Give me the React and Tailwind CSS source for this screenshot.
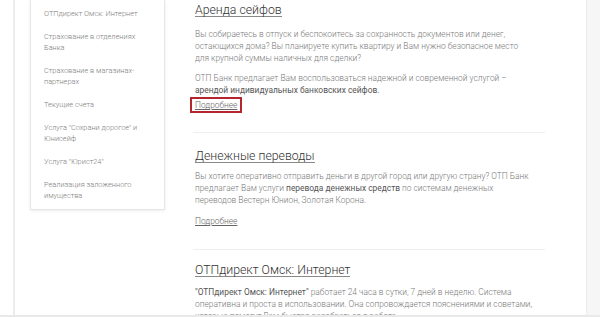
import React from "react";

const sideItems = [
  "ОТПдирект Омск: Интернет",
  "Страхование в отделениях Банка",
  "Страхование в магазинах-партнерах",
  "Текущие счета",
  "Услуга \"Сохрани дорогое\" и Юнисейф",
  "Услуга \"Юрист24\"",
  "Реализация заложенного имущества",
];

const Heading = ({ children }) => (
  <h2 className="inline-block text-[12.3px] font-light leading-[12px] text-[#333] border-b border-[#888]">
    {children}
  </h2>
);

const App = () => {
  return (
    <div
      className="w-[600px] h-[317px] overflow-hidden bg-white flex border-b-2 border-[#e9e9e9]"
      style={{ fontFamily: "Roboto, 'Noto Sans', sans-serif" }}
    >
      <div className="w-[13px] shrink-0" />
      <div className="flex-1 flex border-l-2 border-r border-[#ececec]">
        {/* Боковое меню */}
        <div className="ml-[15px] w-[135px] shrink-0 self-start border border-t-0 border-[#e6e6e6] shadow-[0_1px_3px_rgba(0,0,0,0.08)] pl-[13px] pr-[10px] pt-[8px] pb-[8px]">
          <ul className="flex flex-col gap-[12px] text-[7.4px] leading-[11px] text-[#808080] font-light">
            {sideItems.map((item) => (
              <li key={item}>{item}</li>
            ))}
          </ul>
        </div>

        {/* Основной контент */}
        <div className="ml-[28px] w-[366px] shrink-0 text-[8.4px] leading-[12px] text-[#7a7a7a] font-light whitespace-nowrap">
          <div className="pl-[2px] pt-[4px]">
            <Heading>Аренда сейфов</Heading>
            <p className="mt-[11px]">
              Вы собираетесь в отпуск и беспокоитесь за сохранность документов или денег,
              <br />
              остающихся дома? Вы планируете купить квартиру и Вам нужно безопасное место
              <br />
              для крупной суммы наличных для сделки?
            </p>
            <p className="mt-[8px]">
              ОТП Банк предлагает Вам воспользоваться надежной и современной услугой –
              <br />
              <span className="font-normal text-[#555]">
                арендой индивидуальных банковских сейфов.
              </span>
            </p>
            <div className="mt-[1px] -ml-[5px] inline-block border-2 border-[#b5252e] px-[3px] py-0">
              <a className="underline text-[#666]">Подробнее</a>
            </div>
          </div>

          <div className="mt-[19px] mr-[14px] border-t border-[#eeeeee]" />

          <div className="pl-[2px] pt-[17px]">
            <Heading>Денежные переводы</Heading>
            <p className="mt-[7px]">
              Вы хотите оперативно отправить деньги в другой город или другую страну? ОТП Банк
              <br />
              предлагает Вам услуги{" "}
              <span className="font-normal text-[#555]">перевода денежных средств</span> по системам денежных
              <br />
              переводов Вестерн Юнион, Золотая Корона.
            </p>
            <div className="mt-[9px]">
              <a className="underline text-[#666]">Подробнее</a>
            </div>
          </div>

          <div className="mt-[22px] mr-[14px] border-t border-[#eeeeee]" />

          <div className="pl-[2px] pt-[14px]">
            <Heading>ОТПдирект Омск: Интернет</Heading>
            <p className="mt-[9px]">
              <span className="font-normal text-[#555]">"ОТПдирект Омск: Интернет"</span> работает 24 часа в сутки, 7 дней в неделю. Система
              <br />
              оперативна и проста в использовании. Она сопровождается пояснениями и советами,
              <br />
              которые помогут Вам быстро разобраться в работе.
            </p>
          </div>
        </div>
      </div>
      <div className="w-[13px] shrink-0 bg-[#f6f6f6]" />
    </div>
  );
};

export default App;
